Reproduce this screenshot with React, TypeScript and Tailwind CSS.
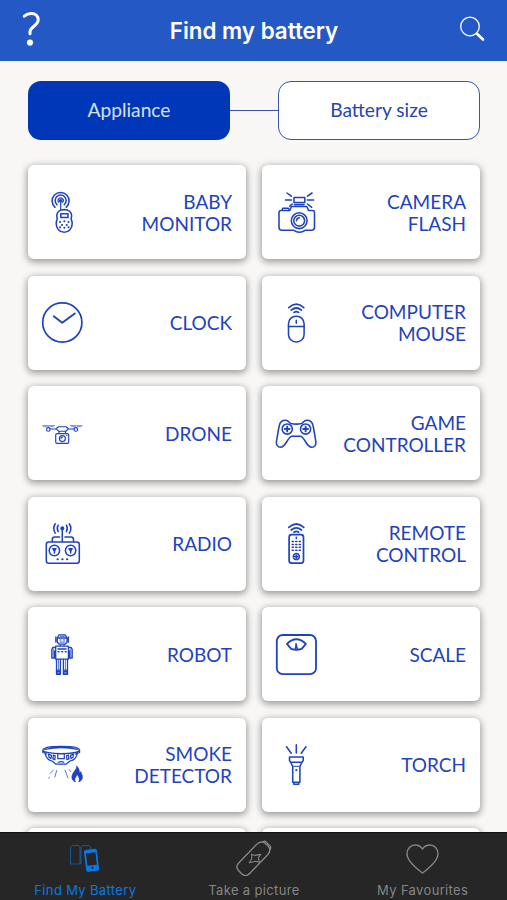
import type { ReactNode } from 'react';

const Wifi = ({ y = 0 }: { y?: number }) => (
  <g transform={`translate(0 ${y})`}>
    <path d="M12.8 4.4Q20.3-2.4 27.8 4.4M15.2 7Q20.3 2.6 25.4 7M18 9.2Q20.3 7.6 22.6 9.2" strokeWidth="1.7" />
  </g>
);

// Every drawing lives on the same 41x41 grid
const icons: Record<string, ReactNode> = {
  baby: (
    <>
      <path d="M13 15.3A8.5 8.5 0 1 1 24.2 15.3M15 12.7A5.500 5.500 0 1 1 22.3 12.7" />
      <path d="M16.8 10.4A2.600 2.600 0 1 1 20.6 10.4M18.7 9v8.500" strokeWidth="1.2" />
      <circle cx="18.7" cy="8.8" r="1" fill="currentColor" />
      <path d="M22.2 17.6c4.6 0 7.4 2.6 7.4 6 0 1.8-.7 2.6-.3 4 .3 1 .9 1.9.9 3.8 0 5-3.4 8.9-8 8.9s-8-3.9-8-8.9c0-1.9.6-2.8.9-3.8.4-1.4-.3-2.2-.3-4 0-3.4 2.8-6 7.4-6z" />
      <path d="M18.8 21.8h7.200v3.600h-7.200z" />
      <path d="M18 30h.1M22.3 29.300h.1M26.500 30h.1M20 33h.1M24.700 33h.1M18 35.300h.1M22.300 35.800h.1M26.500 35.300h.1" strokeWidth="2" />
    </>
  ),
  camera: (
    <>
      <path d="M18 5.500h10.800v5H18zM15.500 8H9.500M31.300 8h6.400M15.300 4.200 11 1M31.500 4.200 36 1M16.300 12l-2.600 2.200M31.500 12l4.200 3.300" />
      <path d="M17.500 38.200H6a3 3 0 0 1-3-3V20.400a2 2 0 0 1 2-2h8.800l1.700-3.900h15.300l1.700 3.900h4a2 2 0 0 1 2 2v14.800a3 3 0 0 1-3 3h-6c-4 2.800-8 2.800-12 0z" />
      <path d="M6 18.200l.8-1.900h5.700l.8 1.900M18.500 12.600h9.500" />
      <circle cx="23.200" cy="28.700" r="7.900" />
      <circle cx="23.200" cy="28.700" r="5.400" />
      <path d="M20.500 28.700a2.900 2.900 0 0 1 2.900-2.900" />
    </>
  ),
  clock: (
    <>
      <circle cx="20.300" cy="20.500" r="19.600" strokeWidth="1.700" />
      <path d="M11.800 14.300 20.200 20.800 32.800 11.500" strokeWidth="1.900" />
    </>
  ),
  mouse: (
    <>
      <Wifi y={1.2} />
      <rect x="12.500" y="14.200" width="15.600" height="25.800" rx="7.500" />
      <path d="M12.500 24.500h15.600M20.300 18.200v3" />
    </>
  ),
  drone: (
    <g strokeWidth="1.150">
      <path d="M16.500 13.700h7.500l2.500 2-2.500 2.500h-7.500l-2.500-2.500zM8.200 16h5.800M26.500 16h5.500" />
      <circle cx="6.300" cy="16.400" r="1.800" />
      <circle cx="33.800" cy="16.400" r="1.800" />
      <path d="M.5 12.600h5M7.300 12.600h5.500M28 12.600h5M35 12.600h5.300M1.500 13.700h3.500M8 13.700h3.500M29.500 13.700h3M35.500 13.700h3.500M6.300 12.500v2M33.800 12.500v2" strokeWidth=".8" strokeOpacity=".75" />
      <path d="M17 18.300v2.200M23.500 18.300v2.200" />
      <rect x="13.700" y="20.600" width="13" height="9.700" rx="1.300" />
      <circle cx="20.400" cy="25.600" r="3" />
      <path d="M19 25.500a1.400 1.400 0 0 1 1.400-1.400M24.600 22.500h.4" />
    </g>
  ),
  game: (
    <>
      <path d="M14.800 10.400q5.500 1.400 10.800 0c1.500-.5 2.200-3.200 5.200-3.200 3.600 0 5.600 2.200 6.200 5.300.9 4 1.900 10.500 2.900 16.300.4 2.900-1.200 5.400-4.100 5.400-2.600 0-4.200-2-6.400-5.700-2.100-3.600-3.300-5.200-5.100-5.200h-8.300c-1.800 0-3 1.600-5.100 5.200-2.200 3.700-3.800 5.700-6.400 5.700-2.900 0-4.500-2.500-4.100-5.400 1-5.800 2-12.300 2.900-16.300.6-3.100 2.600-5.300 6.200-5.300 3 0 3.800 2.700 5.300 3.200z" />
      <circle cx="11.200" cy="16" r="5.100" />
      <circle cx="29.600" cy="16" r="5.100" />
      <path d="M11.200 13.600v4.800M8.800 16h4.800M29.600 13.600v4.800M27.200 16h4.800" strokeWidth="1.900" />
    </>
  ),
  radio: (
    <>
      <rect x="4.300" y="18.900" width="33" height="21.300" rx="2.500" />
      <path d="M10.300 18.500v-2q0-2.500 2.500-2.500h4.800M23 14h6q2.500 0 2.500 2.500v2M20.300 5v13.500" />
      <circle cx="20.300" cy="5.300" r="1.300" fill="currentColor" />
      <path d="M16.200 2.200q-1.900 3.100 0 6.400M13.300.8q-3.200 4.600 0 9.300M24.400 2.200q1.900 3.100 0 6.400M27.300.8q3.200 4.600 0 9.300" />
      <circle cx="12.400" cy="27.500" r="5.200" />
      <circle cx="28.600" cy="27.500" r="5.200" />
      <path d="M12.400 26v4M28.600 26v4" />
      <path d="M10.900 25.700h3l-1.500 2zM27.100 25.700h3l-1.500 2z" fill="currentColor" />
      <path d="M15.500 36.200h.3M20.300 36.200h.3M25 36.200h.3" strokeWidth="2" />
    </>
  ),
  remote: (
    <>
      <Wifi />
      <rect x="13.100" y="11.700" width="14.400" height="28.400" rx="2.500" strokeWidth="1.700" />
      <path d="M20.300 14.200v1.300M16.200 18.500h1.200M19.700 18.500h1.200M23.200 18.500h1.200M16.200 21.400h1.200M19.700 21.400h1.200M23.200 21.400h1.200M16.200 24.300h1.200M19.700 24.300h1.200M23.200 24.300h1.200M16.200 27.200h1.200M19.700 27.200h1.200M23.200 27.200h1.200" />
      <circle cx="20.300" cy="33.600" r="3.100" strokeDasharray="3.500 1.370" />
      <path d="M20.300 32v3.200M18.700 33.600h3.200" />
    </>
  ),
  robot: (
    <g strokeWidth="1.300">
      <path d="M15.300 3.800 17 .8h6.200L25 3.800v4.400l-2 2h-5.700l-2-2zM15.300 4H25M13.800 3v5M26.400 3v5" />
      <path d="M18 6h1M21.500 6h1M18 8.200h4.500M18.200 2.400h4M18.300 10.300v1.800M22 10.300v1.800" strokeOpacity=".7" />
      <path d="M13.700 12.200h12.700v13H13.700zM13.500 13.500h-2.700l-1 2v8.500h2.700v-7M26.500 13.500h2.700l1 2v8.500h-2.700v-7" />
      <path d="M11.200 15v8M28.800 15v8" strokeWidth=".8" />
      <path d="M16 15h8M16.200 17.800h.8M19.800 17.800h.8M23.300 17.800h.8" strokeWidth="1.600" />
      <path d="M14.500 25.500v14.800h3.900V25.500M21.400 25.500v14.800h4.100V25.500M14.500 36.200h3.900M21.400 36.200h4.100" />
      <path d="M16.500 25.500v10M23.400 25.500v10" strokeWidth=".7" />
      <path d="M14.700 37.500h3.500v2.600h-3.500zM21.600 37.500h3.700v2.600h-3.700z" fill="currentColor" fillOpacity=".5" />
    </g>
  ),
  scale: (
    <g strokeWidth="1.800">
      <rect x=".8" y="1" width="39.200" height="39.200" rx="6" />
      <path d="M10.900 9.900Q20.400.7 29.900 9.900L25.700 14.900Q20.400 16.600 15.100 14.900z" />
      <path d="M19.500 15l.5-5.500 1.300 5.500" strokeWidth="1.300" />
    </g>
  ),
  smoke: (
    <g strokeWidth="1.250">
      <path d="M.8 6C1.300 1 37.200 1 37.600 6c0 4.800-36.800 4.800-36.800 0zM2.800 5.500q16.500-4 33 0M.8 6v2.500l4 1.500M37.600 6v2.500l-4 1.500M3 8.800c1 5.200 3.500 7.500 7 8.200l4 3.200h10l4-3.200c3.500-.7 6.500-3 7.500-8.200" />
      <path d="M15.800 9.500h6.500v5.200h-6.500zM6.500 10.200l3 1.200-.5 3-2-1.200zM11.300 11.200l1.800.5-.2 4-2-.8zM31.500 10.200l-3 1.200.5 3 2-1.200zM26.500 11.200l-1.800.5.200 4 2-.8zM16.300 18.300q2.800-1.400 5.500 0" />
      <path d="M11.500 26 8 29.500M14.700 26.500 12.800 33M23 26.300l3 7.500M27 25.500l1.800 2.200M7.500 33.200l-.8 1" strokeWidth=".9" strokeOpacity=".8" />
      <path d="M34.700 22c.3 4-4.900 6.500-4.900 11 0 2.600 1.500 4.400 3.700 5-1.800-3.300.8-4.400 1.500-7.500 1.900 2 3 4.900 1.700 7.500 2.300-.7 3.800-2.500 3.800-5 0-2.300-1.300-3.300-1.500-5.500-1 .5-1.400 1.300-1.500 2.200.3-3-.6-5.900-2.800-7.700z" fill="currentColor" strokeWidth=".5" />
    </g>
  ),
  torch: (
    <>
      <path d="M10.500 2.800 15.200 9.300M20.300.8v8.200M30 2.800 25.200 9.300M13.500 13h13.700v3.500l-1.200 1.700H14.700l-1.200-1.700zM14.700 18.200l2 4.300v15.800h7.200V22.500l2-4.300M17.800 38.500v1.800h5v-1.800" />
      <path d="M17.500 22.300h5.700" strokeWidth="1" />
      <path d="M20.300 25.900v.4" strokeWidth="2" />
    </>
  ),
};

const appliances = [
  { icon: 'baby', lines: ['BABY', 'MONITOR'] },
  { icon: 'camera', lines: ['CAMERA', 'FLASH'] },
  { icon: 'clock', lines: ['CLOCK'] },
  { icon: 'mouse', lines: ['COMPUTER', 'MOUSE'] },
  { icon: 'drone', lines: ['DRONE'] },
  { icon: 'game', lines: ['GAME', 'CONTROLLER'] },
  { icon: 'radio', lines: ['RADIO'] },
  { icon: 'remote', lines: ['REMOTE', 'CONTROL'] },
  { icon: 'robot', lines: ['ROBOT'] },
  { icon: 'scale', lines: ['SCALE'] },
  { icon: 'smoke', lines: ['SMOKE', 'DETECTOR'] },
  { icon: 'torch', lines: ['TORCH'] },
];

function Card({ icon, lines }: { icon?: string; lines?: string[] }) {
  return (
    <div className="flex h-[94px] items-center justify-between rounded-md bg-white pr-[14px] pl-[13.5px] text-[#1f43bd] shadow-[0_2px_7px_1px_rgba(0,0,0,0.38)]">
      {icon && (
        <svg viewBox="0 0 41 41" className="size-[41px] overflow-visible" fill="none" stroke="currentColor" strokeWidth="1.55" strokeLinecap="round" strokeLinejoin="round">
          {icons[icon]}
        </svg>
      )}
      <div className="pt-px text-right text-[19px] leading-[22px]">
        {lines?.map((l) => (
          <p key={l}>{l}</p>
        ))}
      </div>
    </div>
  );
}

export default function App() {
  return (
    <div className="flex h-[900px] w-[507px] flex-col overflow-hidden bg-[#f8f7f6] font-['Lato',sans-serif]">
      <header className="flex h-[60.5px] shrink-0 items-center justify-between bg-[#2459c5] pr-[22px] pl-[22px] text-white">
        <svg viewBox="0 0 18 36" className="mb-[3px] h-9 w-[18px]" fill="none" stroke="currentColor" strokeLinecap="round">
          <path d="M2.300 5.200C4.500 3.300 6.700 2.600 9.300 2.600c4.400 0 6.900 2.500 6.900 6.200 0 6.200-8.200 6.600-8.200 12.200v1.800" strokeWidth="3" />
          <circle cx="8" cy="31.600" r="3.100" fill="currentColor" stroke="none" />
        </svg>
        <h1 className="pt-px pl-[9px] font-['Inter',sans-serif] text-[22.4px] font-semibold">Find my battery</h1>
        <svg viewBox="0 0 26 26" className="mb-[3px] size-[26px]" fill="none" stroke="currentColor" strokeLinecap="round">
          <circle cx="11" cy="10.500" r="9.300" strokeWidth="1.300" />
          <path d="M18 17.800l6 5.700" strokeWidth="2.600" />
        </svg>
      </header>

      <main className="min-h-0 flex-1 overflow-hidden px-7 pt-5">
        <div className="flex h-[59px] w-[452px] items-center text-[19.2px] text-[#2844b0]">
          <button className="h-full w-[202px] rounded-[13px] bg-[#0037b9] pt-px text-[#d5e0fa]">Appliance</button>
          <span className="mt-px h-[1.5px] flex-1 bg-[#3a50b5]" />
          <button className="h-full w-[202px] rounded-[13px] border-[1.5px] border-[#3a50b5] bg-white pt-px">Battery size</button>
        </div>
        <div className="mt-[25.5px] grid w-[452px] grid-cols-2 gap-x-4 gap-y-[16.5px]">
          {appliances.map((a) => (
            <Card key={a.icon} {...a} />
          ))}
          <Card />
          <Card />
        </div>
      </main>

      <nav className="z-10 grid h-[68px] shrink-0 grid-cols-3 border-t border-[#111] bg-[#262626] pl-px font-['Inter',sans-serif] text-[13px] tracking-[0.35px] text-[#858585]">
        <div className="flex flex-col items-center pt-[7px] text-[#0a78e6]">
          <svg viewBox="0 0 36 36" className="size-9" fill="none" stroke="currentColor" strokeLinejoin="round">
            <path d="M3.500 7l2-1.500h6L13 7v17H3.500zM14 24V7l2-1.500h6L23.500 7v2" strokeOpacity=".6" />
            <g transform="rotate(-7 24.500 20)">
              <rect x="18.500" y="9.800" width="12" height="21" rx="1.500" fill="currentColor" />
              <path d="M19.800 12.800h9.500v12.500h-9.500z" fill="#262626" stroke="none" />
              <circle cx="24.500" cy="28" r="1.100" fill="#262626" stroke="none" />
            </g>
          </svg>
          <span className="mt-[6px] leading-[16px]">Find My Battery</span>
        </div>
        <div className="flex flex-col items-center pt-[7px]">
          <svg viewBox="0 0 36 36" className="size-9" fill="none" stroke="currentColor" strokeWidth="1.4" strokeLinejoin="round">
            <path d="M2.200 23.500 20.500 4.500Q25 .2 29.500 3.500l3 3q3 4-.8 8.300L13.300 33.800q-3.300 3.400-7 .6l-4-4.200q-2.800-3.300-.1-6.700z" />
            <path d="M26.500 2l1.700-.6q1-.3 1.800.5l4 4q.9.900.7 2L33.800 10" />
            <path d="M15.500 14.200l3.500 1.200 5.700-1-2.400 3.600 1.200 4.200-3.800-1-6.500 1.500 2.700-4.200z" strokeWidth="1.100" />
          </svg>
          <span className="mt-[6px] leading-[16px]">Take a picture</span>
        </div>
        <div className="flex flex-col items-center pt-[7px]">
          <svg viewBox="0 0 36 36" className="size-9" fill="none" stroke="currentColor" strokeWidth="1.4" strokeLinejoin="round">
            <path d="M17.500 33C15 31 2 22 2 13.700 2 8.500 5.700 5 10 5c3.300 0 6 1.700 7.500 4 1.500-2.300 4.200-4 7.500-4 4.300 0 8 3.500 8 8.700C33 22 20 31 17.500 33z" />
          </svg>
          <span className="mt-[6px] leading-[16px]">My Favourites</span>
        </div>
      </nav>
    </div>
  );
}
